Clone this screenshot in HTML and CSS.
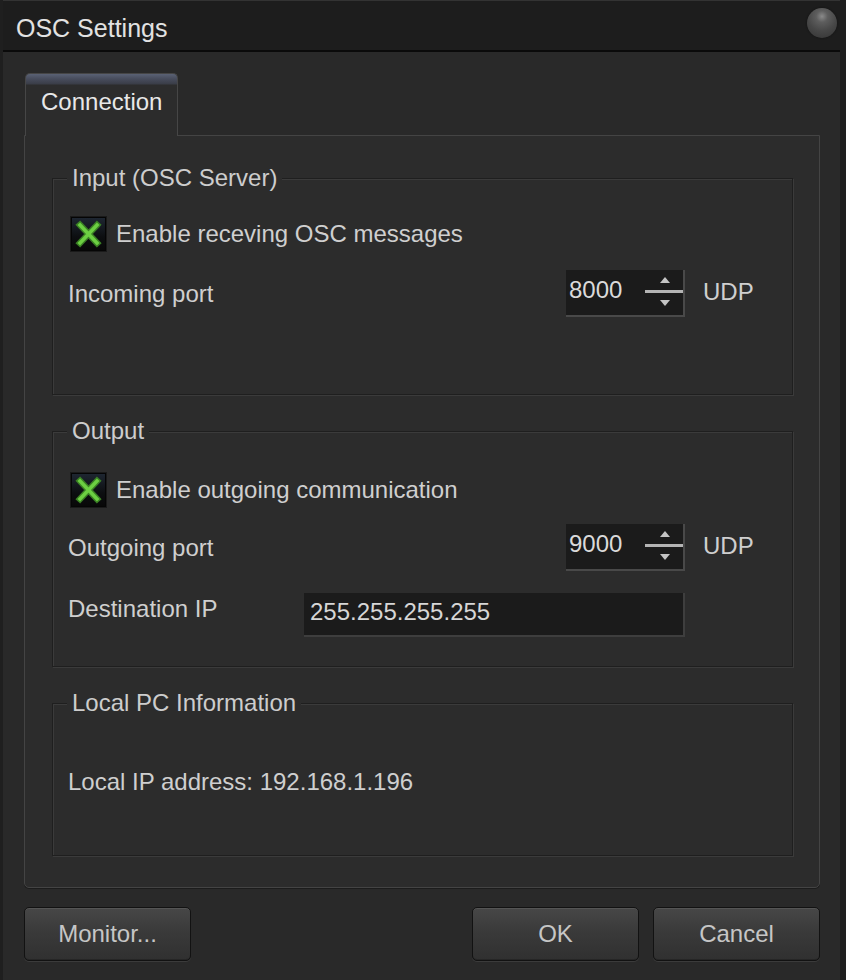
FILE: index.html
```html
<!DOCTYPE html>
<html>
<head>
<meta charset="utf-8">
<title>OSC Settings</title>
<link rel="stylesheet" href="styles.css">
</head>
<body>
<div class="window">
  <div class="titlebar">
    <span class="title">OSC Settings</span>
    <span class="close-dot"></span>
  </div>
  <div class="body">
    <div class="tabs">
      <div class="tab active">Connection</div>
    </div>
    <div class="panel">
      <fieldset class="group g-input">
        <legend>Input (OSC Server)</legend>
        <div class="check-row">
          <span class="checkbox">
            <svg width="33" height="32" viewBox="0 0 33 32"><path d="M8 7 L25 25 M25 7 L8 25" stroke="#3a7f24" stroke-width="6.5" stroke-linecap="square"/><path d="M8 7 L25 25 M25 7 L8 25" stroke="#6ccf42" stroke-width="3.5" stroke-linecap="square"/></svg>
          </span>
          <span class="check-label">Enable receving OSC messages</span>
        </div>
        <div class="field-row spin-row">
          <span class="label">Incoming port</span>
          <div class="spin">
            <span class="spin-value">8000</span>
            <svg class="spin-arrows" width="38" height="45" viewBox="0 0 38 45"><path d="M20 8 L25 14 L15 14 Z" fill="#c4c4c4"/><rect x="0" y="21" width="38" height="3" fill="#b4b4b4"/><path d="M15 31 L25 31 L20 37 Z" fill="#c4c4c4"/></svg>
          </div>
          <span class="unit">UDP</span>
        </div>
      </fieldset>

      <fieldset class="group g-output">
        <legend>Output</legend>
        <div class="check-row">
          <span class="checkbox">
            <svg width="33" height="32" viewBox="0 0 33 32"><path d="M8 7 L25 25 M25 7 L8 25" stroke="#3a7f24" stroke-width="6.5" stroke-linecap="square"/><path d="M8 7 L25 25 M25 7 L8 25" stroke="#6ccf42" stroke-width="3.5" stroke-linecap="square"/></svg>
          </span>
          <span class="check-label">Enable outgoing communication</span>
        </div>
        <div class="field-row spin-row out-spin">
          <span class="label">Outgoing port</span>
          <div class="spin">
            <span class="spin-value">9000</span>
            <svg class="spin-arrows" width="38" height="45" viewBox="0 0 38 45"><path d="M20 8 L25 14 L15 14 Z" fill="#c4c4c4"/><rect x="0" y="21" width="38" height="3" fill="#b4b4b4"/><path d="M15 31 L25 31 L20 37 Z" fill="#c4c4c4"/></svg>
          </div>
          <span class="unit">UDP</span>
        </div>
        <div class="field-row ip-row">
          <span class="label label-top">Destination IP</span>
          <div class="textbox">255.255.255.255</div>
          <span></span>
        </div>
      </fieldset>

      <fieldset class="group g-local">
        <legend>Local PC Information</legend>
        <div class="info">Local IP address: 192.168.1.196</div>
      </fieldset>
    </div>
    <div class="buttons">
      <button class="btn">Monitor...</button>
      <span class="spacer"></span>
      <button class="btn">OK</button>
      <button class="btn">Cancel</button>
    </div>
  </div>
</div>
</body>
</html>
```

FILE: styles.css
```css
* { box-sizing: border-box; }

html, body {
  margin: 0;
  padding: 0;
  background: #222;
}

body {
  font-family: "Liberation Sans", Arial, sans-serif;
  font-size: 24px;
  color: #cfcfcf;
}

.window {
  width: 846px;
  height: 980px;
  display: flex;
  flex-direction: column;
  background: #292929;
  border-left: 3px solid #1f1f1f;
  border-right: 6px solid #1f1f1f;
}

.titlebar {
  height: 52px;
  flex: 0 0 52px;
  background: #1d1d1d;
  border-top: 1px solid #333;
  border-bottom: 2px solid #0a0a0a;
  display: flex;
  align-items: center;
  justify-content: space-between;
  padding: 0 2px 2px 13px;
}

.title {
  font-size: 25px;
  color: #e2e2e2;
  line-height: 28px;
  margin-top: 6px;
}

.close-dot {
  width: 30px;
  height: 30px;
  border-radius: 50%;
  margin-top: -4px;
  margin-right: 1px;
  background: radial-gradient(circle at 50% 28%, #8a8a8a 0, #5e5e5e 22%, #474747 55%, #333 100%);
  box-shadow: 0 0 2px #111;
}

.body {
  flex: 1;
  display: flex;
  flex-direction: column;
  padding: 21px 20px 0 21px;
}

.tabs {
  display: flex;
  padding-left: 1px;
  height: 62px;
}

.tab {
  position: relative;
  z-index: 1;
  width: 153px;
  height: 63px;
  border: 1px solid #464646;
  border-bottom: none;
  border-radius: 5px 5px 0 0;
  background: linear-gradient(#5a6174 0, #474c5c 5px, #3a3d47 10px, #2c2c2c 11px, #2c2c2c 100%);
  color: #e8e8e8;
  padding: 14px 0 0 15px;
  line-height: 28px;
}

.panel {
  border: 1px solid #444;
  border-radius: 0 0 5px 5px;
  background: #2c2c2c;
  padding: 28px 26px 31px 27px;
  display: flex;
  flex-direction: column;
  gap: 22px;
  box-shadow: 0 1px 0 #1c1c1c;
}

.group {
  margin: 0;
  padding: 0 0 0 15px;
  min-width: 0;
  border: 1px solid #1f1f1f;
  box-shadow: inset 1px 1px 0 #3b3b3b, 1px 1px 0 #3b3b3b;
}

.group legend {
  margin-left: -1px;
  padding: 0 5px;
  line-height: 28px;
  color: #cdcdcd;
  background: #2c2c2c;
}

.g-input { padding-bottom: 77px; }
.g-input .check-row { margin-top: 25px; }
.g-input .spin-row { margin-top: 19px; }

.g-output { padding-bottom: 29px; }
.g-output .check-row { margin-top: 28px; }
.g-output .out-spin { margin-top: 17px; }
.g-output .ip-row { margin-top: 22px; }

.g-local { padding-bottom: 59px; }

.check-row {
  display: flex;
  align-items: center;
  height: 34px;
  margin-left: 3px;
}

.checkbox {
  width: 35px;
  height: 34px;
  background: linear-gradient(#1e2631, #0c0e10 60%, #080808);
  border: 1px solid #050505;
  box-shadow: 0 0 0 1px #1a1a1a;
  display: flex;
  align-items: center;
  justify-content: center;
}

.check-label {
  margin-left: 10px;
  line-height: 28px;
}

.field-row {
  display: grid;
  grid-template-columns: 1fr auto 107px;
  align-items: center;
}

.label { line-height: 28px; }

.label-top {
  align-self: start;
  padding-top: 2px;
}

.spin {
  width: 119px;
  height: 47px;
  background: #1b1b1b;
  border-right: 2px solid #494949;
  border-bottom: 2px solid #494949;
  display: flex;
  align-items: center;
  justify-content: space-between;
  padding-left: 3px;
}

.spin-value {
  color: #dadada;
  line-height: 28px;
  margin-top: -6px;
}

.spin-arrows {
  display: block;
  margin-top: -2px;
}

.unit {
  padding-left: 18px;
  line-height: 28px;
  margin-top: -4px;
}

.textbox {
  width: 381px;
  height: 44px;
  background: #1b1b1b;
  border-right: 2px solid #3e3e3e;
  border-bottom: 2px solid #3e3e3e;
  padding: 5px 0 0 6px;
  line-height: 28px;
  color: #d6d6d6;
}

.info {
  margin-top: 51px;
  line-height: 28px;
}

.buttons {
  display: flex;
  margin-top: 19px;
  gap: 14px;
}

.spacer { flex: 1; }

.btn {
  width: 167px;
  height: 54px;
  font-family: "Liberation Sans", Arial, sans-serif;
  font-size: 24px;
  color: #c6c6c6;
  border: 1px solid #121212;
  border-radius: 5px;
  background: linear-gradient(#474747 0, #3a3a3a 45%, #303030 100%);
  box-shadow: inset 0 1px 0 #555, inset 0 -1px 0 #262626, 0 1px 0 #3b3b3b;
  padding: 0;
}
```
